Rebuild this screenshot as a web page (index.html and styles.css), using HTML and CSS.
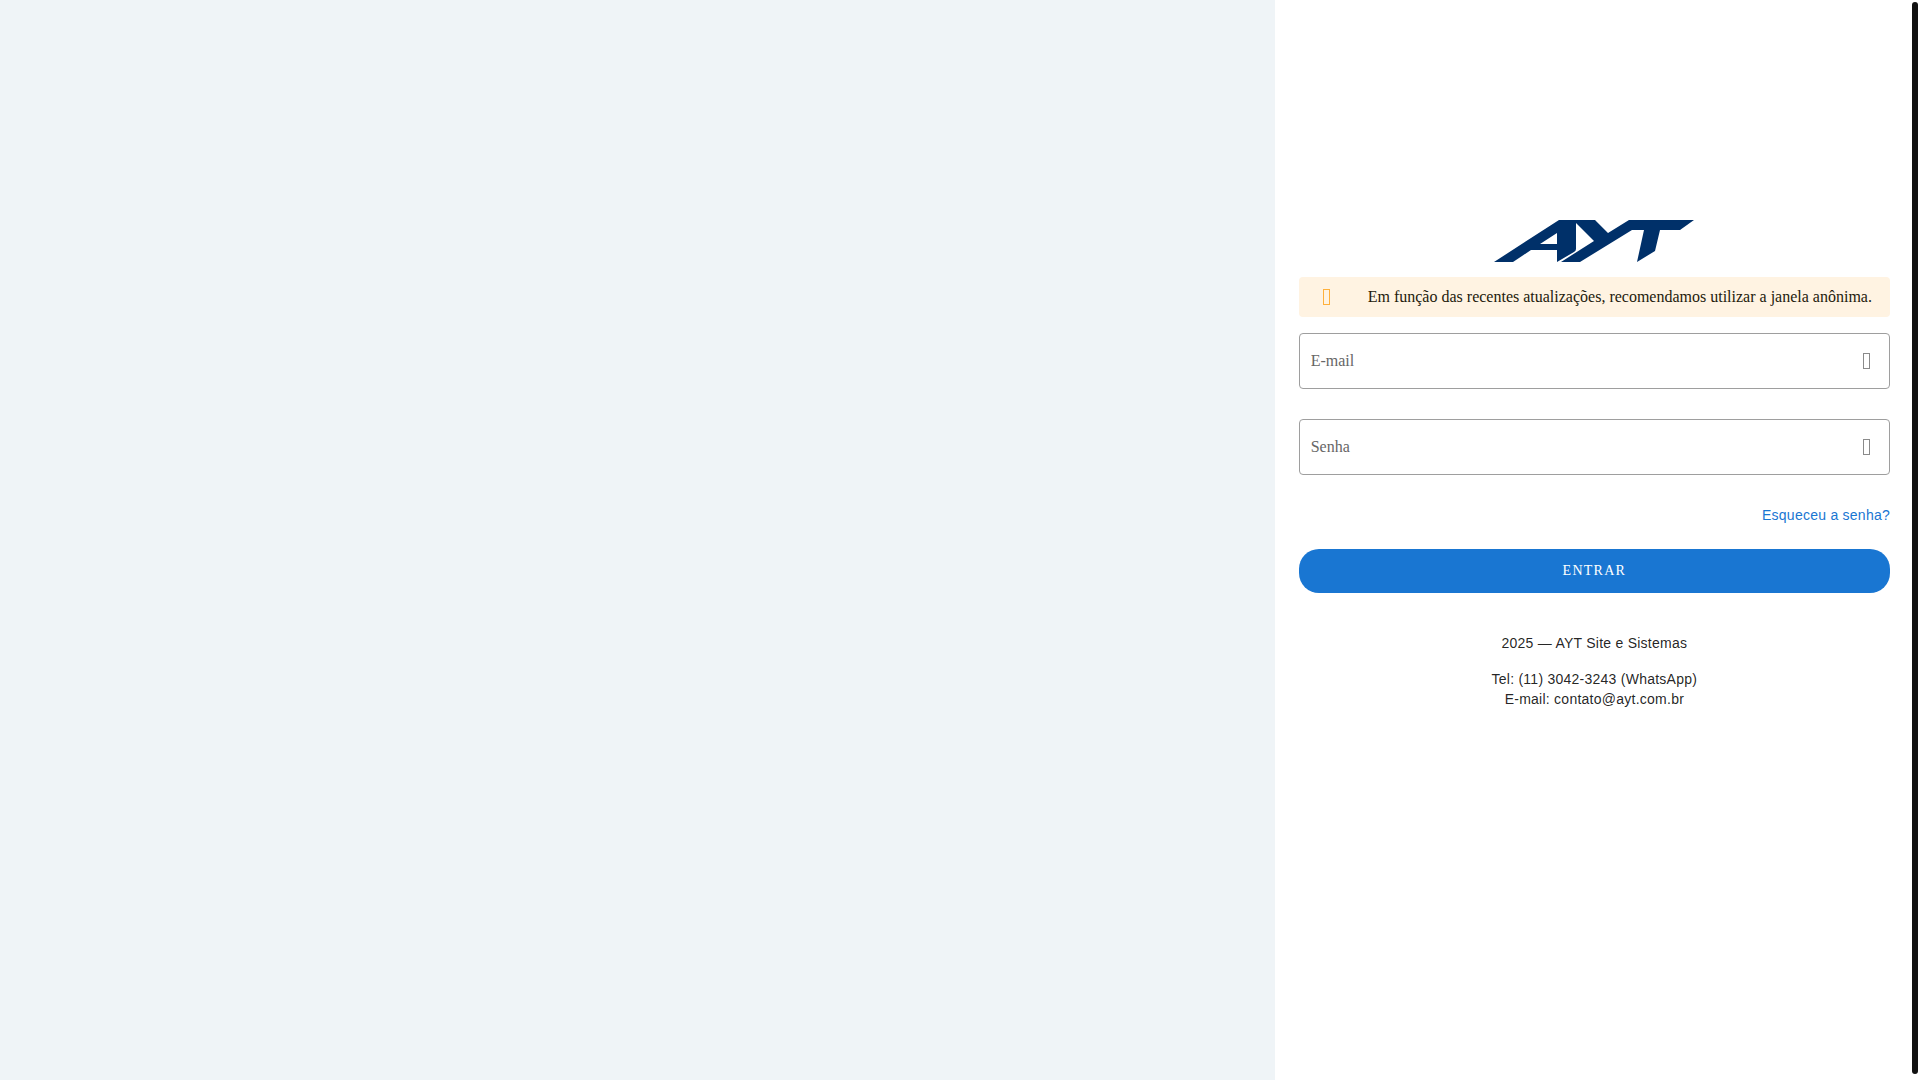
FILE: index.html
```html
<!DOCTYPE html>
<html lang="pt-BR">
<head>
  <meta charset="UTF-8">
  <meta name="viewport" content="width=device-width, initial-scale=1.0">
  <title>AYT Site e Sistemas</title>
  <link rel="stylesheet" href="styles.css">
</head>
<body>
  <div class="page">
    <div class="banner"></div>

    <main class="login">
      <svg class="logo" viewBox="0 0 200 42" role="img" aria-label="AYT">
        <path fill="#003069" fill-rule="evenodd" d="M0 42 L65 0 H101 L114 13 L135 0 H200 L186 10 H166 L161 31 L143 42 L150 10 H138 L86 42 H67 L100 21 L82 3 V29 Q82 31 80 32 L63 42 V30 H37 L19 42 Z M46 24 H63 V13 Z"/>
      </svg>

      <div class="alert" role="alert">
        <span class="icon icon-warning"></span>
        <div>Em função das recentes atualizações, recomendamos utilizar a janela anônima.</div>
      </div>

      <form onsubmit="return false">
        <div class="field">
          <input type="email" id="email" placeholder="E-mail" aria-label="E-mail">
          <label for="email"><span class="icon"></span></label>
        </div>
        <div class="field">
          <input type="password" id="senha" placeholder="Senha" aria-label="Senha">
          <label for="senha"><span class="icon"></span></label>
        </div>

        <a class="forgot" href="#">Esqueceu a senha?</a>
        <button type="submit">Entrar</button>
      </form>

      <footer>
        <p>2025 — AYT Site e Sistemas</p>
        <p>Tel: (11) 3042-3243 (WhatsApp)<br>E-mail: contato@ayt.com.br</p>
      </footer>
    </main>
  </div>
  <div class="scrollbar"></div>
</body>
</html>
```
FILE: styles.css
```css
* { box-sizing: border-box; }
body {
  margin: 0;
  font-family: "Liberation Serif", "Times New Roman", serif;
  font-size: 16px;
  line-height: 24px;
  color: rgba(0, 0, 0, 0.87);
  background: #fff;
}
.page {
  display: grid;
  grid-template-columns: 66.6% minmax(0, 1fr);
  min-height: 100vh;
  padding-right: 6px;
}
.banner { background: #eff4f7; }
.login { padding: 220px 24px 24px; }
.logo {
  display: block;
  width: 200px;
  height: 42px;
  margin: 0 auto 15px;
}
.alert {
  display: flex;
  align-items: center;
  gap: 38px;
  padding: 8px 16px 8px 24px;
  border-radius: 4px;
  background: #fff3e2;
  color: #231a0c;
}
.icon {
  display: block;
  flex: none;
  width: 7px;
  height: 16px;
  border: 1px solid #8a8a8a;
}
.icon-warning { border-color: #ffb03b; }
.field {
  display: flex;
  align-items: center;
  height: 56px;
  margin: 16px 0 30px;
  padding: 0 19px 0 11px;
  border: 1px solid #9e9e9e;
  border-radius: 4px;
}
.field input {
  flex: 1;
  height: 100%;
  min-width: 0;
  padding: 0;
  border: none;
  outline: none;
  background: none;
  font: inherit;
}
.field input::placeholder {
  color: #666;
  opacity: 1;
}
.field + .field { margin-top: 0; }
.forgot {
  display: block;
  margin-bottom: 24px;
  color: #1976d2;
  font: 14px/20px "Liberation Sans", Arial, sans-serif;
  letter-spacing: 0.25px;
  text-align: right;
  text-decoration: none;
}
button {
  display: block;
  width: 100%;
  height: 44px;
  border: none;
  border-radius: 20px;
  background: #1976d2;
  color: #fff;
  font: 14px/20px "Liberation Serif", serif;
  letter-spacing: 1.25px;
  text-transform: uppercase;
  cursor: pointer;
}
footer {
  margin-top: 40px;
  font: 14px/20px "Liberation Sans", Arial, sans-serif;
  letter-spacing: 0.25px;
  text-align: center;
}
footer p { margin: 0 0 16px; }
.scrollbar {
  position: fixed;
  top: 2px;
  right: 2px;
  bottom: 6px;
  width: 6px;
  border-radius: 3px;
  background: #111;
}
@media (max-width: 960px) {
  .page { grid-template-columns: minmax(0, 1fr); }
  .banner { display: none; }
}
```
